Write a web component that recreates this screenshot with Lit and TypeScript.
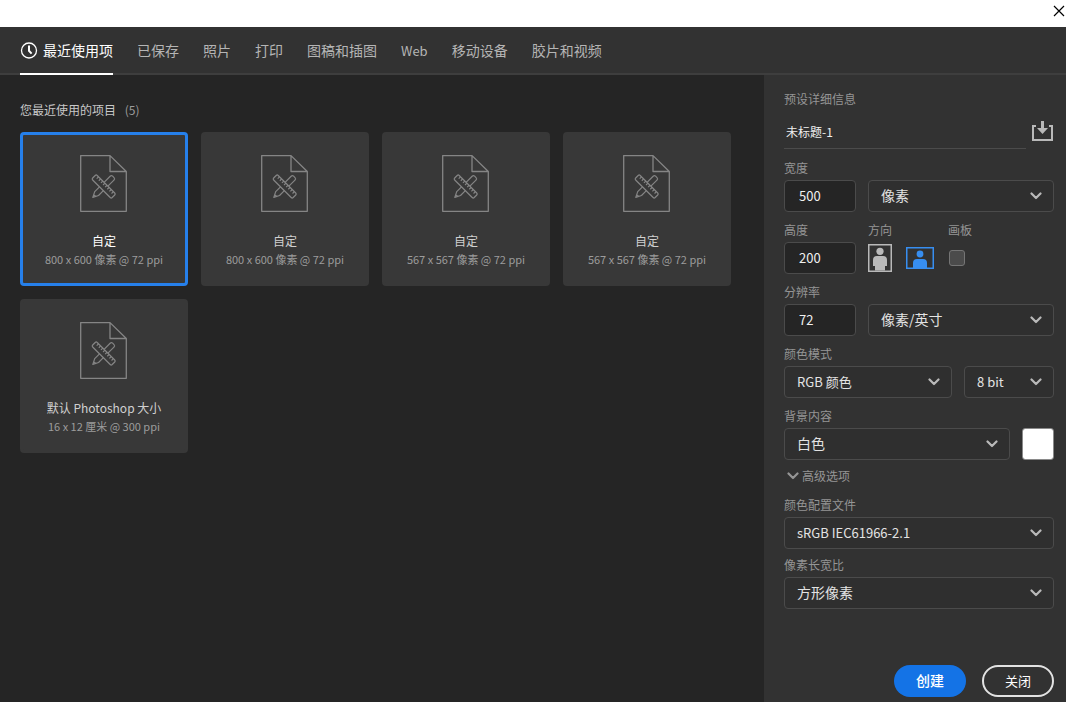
import { LitElement, html, css, svg } from "lit";
import { customElement, property, state } from "lit/decorators.js";
import { classMap } from "lit/directives/class-map.js";

interface Preset {
  name: string;
  detail: string;
}

const TABS = ["最近使用项", "已保存", "照片", "打印", "图稿和插图", "Web", "移动设备", "胶片和视频"];

const PRESETS: Preset[] = [
  { name: "自定", detail: "800 x 600 像素 @ 72 ppi" },
  { name: "自定", detail: "800 x 600 像素 @ 72 ppi" },
  { name: "自定", detail: "567 x 567 像素 @ 72 ppi" },
  { name: "自定", detail: "567 x 567 像素 @ 72 ppi" },
  { name: "默认 Photoshop 大小", detail: "16 x 12 厘米 @ 300 ppi" },
];

const hasLatin = (text: string) => /[A-Za-z]/.test(text);

const chevron = svg`<path d="M1.5 1.5 L6 6 L10.5 1.5" fill="none" stroke="currentColor" stroke-width="2.2" stroke-linecap="round" stroke-linejoin="round" />`;

const reset = css`
  *,
  *::before,
  *::after {
    box-sizing: border-box;
  }
  button,
  input,
  select {
    font: inherit;
    color: inherit;
    margin: 0;
    padding: 0;
    border: 0;
    background: none;
    border-radius: 0;
    min-width: 0;
  }
  svg {
    display: block;
  }
`;

@customElement("preset-card")
export class PresetCard extends LitElement {
  @property() name = "";
  @property() detail = "";
  @property({ type: Boolean }) selected = false;

  static styles = [
    reset,
    css`
      :host {
        display: block;
      }
      .card {
        display: flex;
        flex-direction: column;
        align-items: center;
        width: 100%;
        height: 154px;
        padding-top: 20px;
        border: 3px solid #383838;
        border-radius: 4px;
        background: #383838;
        color: #d0d0d0;
        font-size: 12px;
        line-height: 18px;
      }
      .selected {
        border-color: #2680eb;
        color: #ffffff;
      }
      .doc {
        margin-bottom: 20px;
        color: #858585;
      }
      .detail {
        color: #9c9c9c;
        font-size: 11px;
      }
    `,
  ];

  render() {
    return html`
      <button class=${classMap({ card: true, selected: this.selected })} type="button" aria-pressed=${this.selected}>
        <svg class="doc" width="48" height="57" viewBox="0 0 48 57" fill="none" stroke="currentColor" aria-hidden="true">
          <path d="M30 0.6 H0.7 V56.3 H46.3 V16.5 Z M30 0.6 V16.5 H46.3" stroke-width="1.3" stroke-linejoin="round" />
          <g transform="translate(23.7 31.5) rotate(45)" stroke-width="1.2" stroke-linejoin="round">
            <path d="M-2.7 -3.2 V-11.8 Q-2.7 -13.6 -1 -13.6 H1 Q2.7 -13.6 2.7 -11.8 V-3.2 M-2.7 3.2 V10 L0 15.4 L2.7 10 V3.2 M-1.4 12.8 H1.4" />
            <path d="M-12.4 -3.2 H12.4 Q13.8 -3.2 13.8 -1.8 V1.8 Q13.8 3.2 12.4 3.2 H-12.4 Q-13.8 3.2 -13.8 1.8 V-1.8 Q-13.8 -3.2 -12.4 -3.2 Z" />
            <path d="M-10.5 -3.2 V-0.6 M-7.5 -3.2 V-0.6 M-4.5 -3.2 V-0.6 M-1.5 -3.2 V-0.6 M1.5 -3.2 V-0.6 M4.5 -3.2 V-0.6 M7.5 -3.2 V-0.6 M10.5 -3.2 V-0.6" />
          </g>
        </svg>
        <span>${this.name}</span>
        <span class="detail">${this.detail}</span>
      </button>
    `;
  }
}

@customElement("select-box")
export class SelectBox extends LitElement {
  @property() label = "";
  @property() hint = "";
  @property() value = "";

  static styles = [
    reset,
    css`
      :host {
        display: block;
        min-width: 0;
      }
      .field {
        display: grid;
        gap: 4px;
      }
      .label {
        font-size: 12px;
        line-height: 16px;
        color: #959595;
      }
      .box {
        display: grid;
        align-items: center;
      }
      .select {
        grid-area: 1 / 1;
        width: 100%;
        height: 32px;
        padding: 0 32px 2px 12px;
        appearance: none;
        border: 1px solid #4b4b4b;
        border-radius: 4px;
        background: #2f2f2f;
        color: #e3e3e3;
        font-size: 14px;
      }
      .latin {
        font-size: 13px;
      }
      .arrow {
        grid-area: 1 / 1;
        justify-self: end;
        margin-right: 12px;
        color: #b9b9b9;
        pointer-events: none;
      }
    `,
  ];

  render() {
    return html`
      <div class="field">
        ${this.label ? html`<label class="label" for="control">${this.label}</label>` : null}
        <div class="box">
          <select
            class=${classMap({ select: true, latin: hasLatin(this.value) })}
            id="control"
            aria-label=${this.label || this.hint}
          >
            <option>${this.value}</option>
          </select>
          <svg class="arrow" width="12" height="8" viewBox="0 0 12 8" aria-hidden="true">${chevron}</svg>
        </div>
      </div>
    `;
  }
}

@customElement("app-root")
export class AppRoot extends LitElement {
  @state() private tab = 0;
  @state() private card = 0;
  @state() private landscape = true;

  static styles = [
    reset,
    css`
      :host {
        display: flex;
        flex-direction: column;
        min-height: 100vh;
        background: #252525;
        color: #e3e3e3;
        font-family: "Noto Sans CJK SC", sans-serif;
        font-size: 14px;
      }
      .titlebar {
        display: flex;
        justify-content: flex-end;
        height: 27px;
        padding: 5px 1px 0 0;
        background: #ffffff;
        color: #000000;
      }
      .close {
        width: 12px;
        height: 12px;
      }
      .tabs {
        display: flex;
        gap: 24px;
        height: 48px;
        padding: 0 20px;
        border-bottom: 2px solid #3e3e3e;
        background: #323232;
      }
      .tab {
        display: flex;
        align-items: center;
        gap: 5px;
        height: 48px;
        border-bottom: 2px solid transparent;
        color: #b5b5b5;
        white-space: nowrap;
      }
      .tab.active {
        border-color: #ffffff;
        color: #ffffff;
      }
      .latin {
        font-size: 13px;
      }
      .body {
        display: flex;
        flex: 1;
      }
      .recent {
        flex: 1;
        min-width: 0;
        padding: 26px 20px 20px;
      }
      .heading {
        margin: 0 0 13px;
        font-size: 12px;
        font-weight: 400;
        line-height: 18px;
        color: #c8c8c8;
      }
      .count {
        margin-left: 6px;
        color: #9c9c9c;
      }
      .cards {
        display: grid;
        grid-template-columns: repeat(auto-fill, 168px);
        gap: 13px;
      }
      .panel {
        display: flex;
        flex-direction: column;
        flex: none;
        width: 302px;
        padding: 16px 12px 5px 20px;
        background: #323232;
      }
      .title,
      .label {
        margin: 0;
        font-size: 12px;
        font-weight: 400;
        line-height: 16px;
        color: #959595;
      }
      .name-row {
        display: flex;
        align-items: center;
        gap: 6px;
        margin: 8px 0 11px;
      }
      .name {
        flex: 1;
        height: 34px;
        padding: 0 2px;
        border-bottom: 1px solid #4b4b4b;
        color: #f0f0f0;
        font-size: 12px;
      }
      .save {
        padding-bottom: 2px;
        color: #b9b9b9;
      }
      .form {
        display: grid;
        gap: 10px;
      }
      .form.tight {
        gap: 8px;
      }
      .row {
        display: flex;
        align-items: flex-end;
        gap: 12px;
      }
      .grow {
        flex: 1;
      }
      .field {
        display: grid;
        gap: 4px;
      }
      .number {
        width: 72px;
        height: 32px;
        padding: 0 14px 2px;
        border: 1px solid #4b4b4b;
        border-radius: 4px;
        background: #252525;
        color: #f0f0f0;
        font-size: 13px;
      }
      .orient {
        width: 68px;
        margin: 0;
        padding: 0;
        border: 0;
      }
      .legend {
        padding: 0;
        margin-bottom: 4px;
      }
      .choices {
        display: flex;
        align-items: center;
        gap: 14px;
        height: 32px;
      }
      .choice {
        display: grid;
        color: #b9b9b9;
      }
      .choice.on {
        color: #378ef0;
      }
      .radio {
        grid-area: 1 / 1;
        appearance: none;
      }
      .glyph {
        grid-area: 1 / 1;
      }
      .tick {
        display: flex;
        align-items: center;
        height: 32px;
      }
      .checkbox {
        width: 16px;
        height: 16px;
        margin-left: 1px;
        appearance: none;
        border: 1px solid #757575;
        border-radius: 3px;
        background: #4b4b4b;
      }
      .bits {
        width: 90px;
      }
      .swatch {
        width: 32px;
        height: 32px;
        appearance: none;
        border: 1px solid #8a8a8a;
        border-radius: 3px;
        overflow: hidden;
      }
      .swatch::-webkit-color-swatch-wrapper {
        padding: 0;
      }
      .swatch::-webkit-color-swatch {
        border: 0;
      }
      .advanced {
        display: flex;
        align-items: center;
        gap: 3px;
        margin: 8px 0 13px 3px;
        font-size: 12px;
        line-height: 16px;
        color: #959595;
      }
      .actions {
        display: flex;
        justify-content: flex-end;
        gap: 16px;
        margin-top: auto;
        padding-top: 20px;
      }
      .action {
        width: 72px;
        height: 32px;
        padding-bottom: 2px;
        border-radius: 16px;
        color: #ffffff;
        font-size: 14px;
        font-weight: 500;
      }
      .primary {
        background: #1473e6;
      }
      .secondary {
        border: 2px solid #e3e3e3;
        font-size: 13px;
        font-weight: 400;
      }
    `,
  ];

  render() {
    return html`
      <header class="titlebar">
        <button class="close" type="button" aria-label="关闭窗口">
          <svg width="12" height="12" viewBox="0 0 12 12" aria-hidden="true">
            <path d="M1 1 L11 11 M11 1 L1 11" stroke="currentColor" stroke-width="1.2" />
          </svg>
        </button>
      </header>

      <nav class="tabs" role="tablist">
        ${TABS.map(
          (name, i) => html`
            <button
              class=${classMap({ tab: true, active: i === this.tab, latin: hasLatin(name) })}
              type="button"
              role="tab"
              aria-selected=${i === this.tab}
              @click=${() => (this.tab = i)}
            >
              ${i === 0
                ? html`<svg width="18" height="18" viewBox="0 0 18 18" fill="none" stroke="currentColor" aria-hidden="true">
                    <circle cx="9" cy="9.5" r="7.5" stroke-width="1.3" />
                    <path d="M9 4.5 V9.8 L11.6 12.6" stroke-width="2" />
                  </svg>`
                : null}
              <span>${name}</span>
            </button>
          `
        )}
      </nav>

      <div class="body">
        <main class="recent">
          <h2 class="heading">您最近使用的项目 <span class="count">(${PRESETS.length})</span></h2>
          <div class="cards">
            ${PRESETS.map(
              (p, i) => html`
                <preset-card
                  .name=${p.name}
                  .detail=${p.detail}
                  .selected=${i === this.card}
                  @click=${() => (this.card = i)}
                ></preset-card>
              `
            )}
          </div>
        </main>

        <aside class="panel">
          <h2 class="title">预设详细信息</h2>
          <div class="name-row">
            <input class="name" type="text" aria-label="文档名称" value="未标题-1" />
            <button class="save" type="button" aria-label="存储预设">
              <svg width="22" height="22" viewBox="0 0 22 22" fill="none" stroke="currentColor" aria-hidden="true">
                <path d="M4 6 H1 V20 H20 V6 H17" stroke-width="2" />
                <path d="M10.5 1 V8" stroke-width="3" />
                <path d="M5 8 H16 L10.5 14 Z" fill="currentColor" stroke="none" />
              </svg>
            </button>
          </div>

          <div class="form">
            <div class="row">
              <div class="field">
                <label class="label" for="width">宽度</label>
                <input class="number" id="width" type="text" inputmode="numeric" value="500" />
              </div>
              <select-box class="grow" hint="单位" value="像素"></select-box>
            </div>

            <div class="row">
              <div class="field">
                <label class="label" for="height">高度</label>
                <input class="number" id="height" type="text" inputmode="numeric" value="200" />
              </div>
              <fieldset class="orient">
                <legend class="label legend">方向</legend>
                <div class="choices">
                  <label class=${classMap({ choice: true, on: !this.landscape })}>
                    <input
                      class="radio"
                      type="radio"
                      name="orientation"
                      aria-label="纵向"
                      .checked=${!this.landscape}
                      @change=${() => (this.landscape = false)}
                    />
                    <svg class="glyph" width="24" height="28" viewBox="0 0 24 28" aria-hidden="true">
                      <rect x="0.75" y="0.75" width="22.5" height="26.5" fill="none" stroke="currentColor" stroke-width="1.5" />
                      <circle cx="12" cy="7.3" r="3.6" fill="currentColor" />
                      <path d="M9 12 H15 Q19 12 19 16 V22 H17 V26.5 H7 V22 H5 V16 Q5 12 9 12 Z" fill="currentColor" />
                    </svg>
                  </label>
                  <label class=${classMap({ choice: true, on: this.landscape })}>
                    <input
                      class="radio"
                      type="radio"
                      name="orientation"
                      aria-label="横向"
                      .checked=${this.landscape}
                      @change=${() => (this.landscape = true)}
                    />
                    <svg class="glyph" width="28" height="22" viewBox="0 0 28 22" aria-hidden="true">
                      <rect x="0.75" y="0.75" width="26.5" height="20.5" fill="none" stroke="currentColor" stroke-width="1.5" />
                      <circle cx="14" cy="7" r="3.4" fill="currentColor" />
                      <path d="M11 12 H17 Q21 12 21 16 V21 H7 V16 Q7 12 11 12 Z" fill="currentColor" />
                    </svg>
                  </label>
                </div>
              </fieldset>
              <div class="field">
                <label class="label" for="artboard">画板</label>
                <div class="tick"><input class="checkbox" id="artboard" type="checkbox" /></div>
              </div>
            </div>

            <div class="row">
              <div class="field">
                <label class="label" for="resolution">分辨率</label>
                <input class="number" id="resolution" type="text" inputmode="numeric" value="72" />
              </div>
              <select-box class="grow" hint="分辨率单位" value="像素/英寸"></select-box>
            </div>

            <div class="row">
              <select-box class="grow" label="颜色模式" value="RGB 颜色"></select-box>
              <select-box class="bits" hint="位深度" value="8 bit"></select-box>
            </div>

            <div class="row">
              <select-box class="grow" label="背景内容" value="白色"></select-box>
              <input class="swatch" type="color" aria-label="背景颜色" value="#ffffff" />
            </div>
          </div>

          <button class="advanced" type="button" aria-expanded="true">
            <svg width="12" height="8" viewBox="0 0 12 8" aria-hidden="true">${chevron}</svg>
            <span>高级选项</span>
          </button>

          <div class="form tight">
            <select-box label="颜色配置文件" value="sRGB IEC61966-2.1"></select-box>
            <select-box label="像素长宽比" value="方形像素"></select-box>
          </div>

          <div class="actions">
            <button class="action primary" type="button">创建</button>
            <button class="action secondary" type="button">关闭</button>
          </div>
        </aside>
      </div>
    `;
  }
}
